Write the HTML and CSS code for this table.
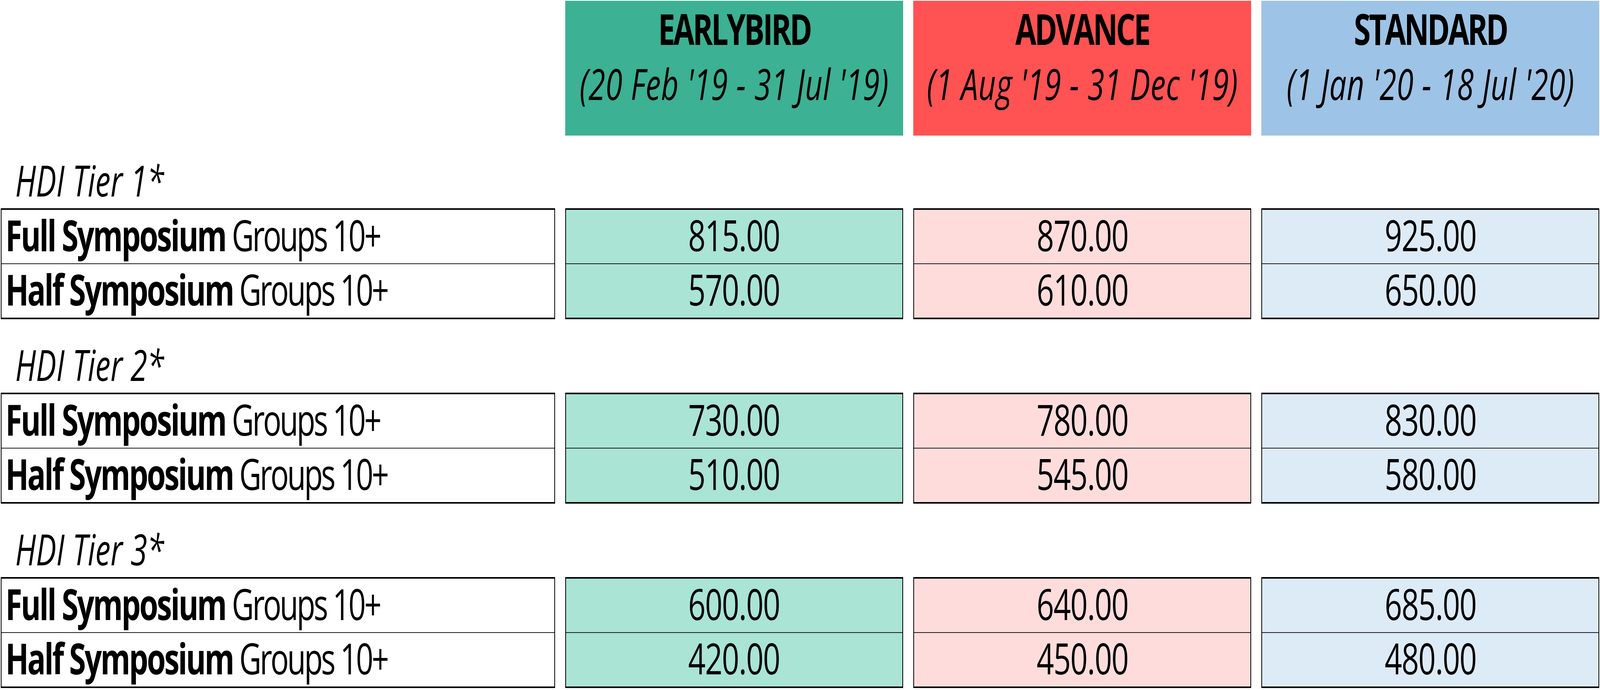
FILE: index.html
```html
<!DOCTYPE html>
<html lang="en">
<head>
<meta charset="utf-8">
<title>Symposium Group Rates</title>
<link rel="stylesheet" href="styles.css">
</head>
<body>
<div class="sheet">
  <div class="cols head-row">
    <div class="blank"></div>
    <div class="head early">
      <div class="head-line head-title"><span class="fit">EARLYBIRD</span></div>
      <div class="head-line head-dates"><span class="fit">(20 Feb '19 - 31 Jul '19)</span></div>
    </div>
    <div class="head advance">
      <div class="head-line head-title"><span class="fit">ADVANCE</span></div>
      <div class="head-line head-dates"><span class="fit">(1 Aug '19 - 31 Dec '19)</span></div>
    </div>
    <div class="head standard">
      <div class="head-line head-title"><span class="fit">STANDARD</span></div>
      <div class="head-line head-dates"><span class="fit">(1 Jan '20 - 18 Jul '20)</span></div>
    </div>
  </div>

  <section class="tier">
    <div class="tier-label"><span class="fit">HDI Tier 1*</span></div>
    <div class="cols">
      <div class="box label-box">
        <div class="cell"><span class="fit"><b>Full Symposium</b> Groups 10+</span></div>
        <div class="cell"><span class="fit"><b>Half Symposium</b> Groups 10+</span></div>
      </div>
      <div class="box early-box">
        <div class="cell num"><span class="fit">815.00</span></div>
        <div class="cell num"><span class="fit">570.00</span></div>
      </div>
      <div class="box advance-box">
        <div class="cell num"><span class="fit">870.00</span></div>
        <div class="cell num"><span class="fit">610.00</span></div>
      </div>
      <div class="box standard-box">
        <div class="cell num"><span class="fit">925.00</span></div>
        <div class="cell num"><span class="fit">650.00</span></div>
      </div>
    </div>
  </section>

  <section class="tier">
    <div class="tier-label"><span class="fit">HDI Tier 2*</span></div>
    <div class="cols">
      <div class="box label-box">
        <div class="cell"><span class="fit"><b>Full Symposium</b> Groups 10+</span></div>
        <div class="cell"><span class="fit"><b>Half Symposium</b> Groups 10+</span></div>
      </div>
      <div class="box early-box">
        <div class="cell num"><span class="fit">730.00</span></div>
        <div class="cell num"><span class="fit">510.00</span></div>
      </div>
      <div class="box advance-box">
        <div class="cell num"><span class="fit">780.00</span></div>
        <div class="cell num"><span class="fit">545.00</span></div>
      </div>
      <div class="box standard-box">
        <div class="cell num"><span class="fit">830.00</span></div>
        <div class="cell num"><span class="fit">580.00</span></div>
      </div>
    </div>
  </section>

  <section class="tier">
    <div class="tier-label"><span class="fit">HDI Tier 3*</span></div>
    <div class="cols">
      <div class="box label-box">
        <div class="cell"><span class="fit"><b>Full Symposium</b> Groups 10+</span></div>
        <div class="cell"><span class="fit"><b>Half Symposium</b> Groups 10+</span></div>
      </div>
      <div class="box early-box">
        <div class="cell num"><span class="fit">600.00</span></div>
        <div class="cell num"><span class="fit">420.00</span></div>
      </div>
      <div class="box advance-box">
        <div class="cell num"><span class="fit">640.00</span></div>
        <div class="cell num"><span class="fit">450.00</span></div>
      </div>
      <div class="box standard-box">
        <div class="cell num"><span class="fit">685.00</span></div>
        <div class="cell num"><span class="fit">480.00</span></div>
      </div>
    </div>
  </section>
</div>
</body>
</html>
```

FILE: styles.css
```css
/* The sheet is drawn on a 5727 x 1766 design grid.
   --ux: one design pixel horizontally, --uy: one design pixel vertically.
   --sx: horizontal squeeze of text when the viewport aspect differs. */
html {
  --ux: calc(100vw / 5727);
  --uy: calc(100vh / 1766);
  --sx: 1;
  --sx: calc(tan(atan2(100vw, 100vh)) * 1766 / 5727);
  margin: 0;
  padding: 0;
  background: #ffffff;
  overflow: hidden;
}

body {
  margin: 0;
  padding: 0;
  font-family: "Open Sans", "Noto Sans", sans-serif;
  font-size: calc(109 * var(--uy));
  color: #000000;
}

.sheet {
  padding: calc(2 * var(--uy)) 0 0 calc(3 * var(--ux));
  width: calc(5722 * var(--ux));
}

.cols {
  display: grid;
  grid-template-columns: calc(1984 * var(--ux)) calc(1210 * var(--ux)) calc(1210 * var(--ux)) calc(1210 * var(--ux));
  column-gap: calc(36 * var(--ux));
}

.fit {
  flex: none;
  white-space: nowrap;
  transform: scaleX(var(--sx));
  transform-origin: left center;
}

/* header */
.head-row {
  height: calc(345 * var(--uy));
}

.head-line {
  height: calc(141 * var(--uy));
  line-height: calc(141 * var(--uy));
  display: flex;
  justify-content: center;
}

.head-line .fit {
  transform-origin: center center;
}

.head-title {
  font-weight: 700;
  letter-spacing: calc(-6 * var(--uy));
}

.head-dates {
  font-style: italic;
  letter-spacing: calc(1 * var(--uy));
}

.early { background: #3cb193; }
.advance { background: #ff5252; }
.standard { background: #9dc3e6; }

/* tier caption */
.tier-label {
  height: calc(188 * var(--uy));
  box-sizing: border-box;
  display: flex;
  align-items: flex-end;
  padding: 0 0 calc(18 * var(--uy)) calc(51 * var(--ux));
  font-style: italic;
  line-height: 1;
}

.tier:first-of-type .tier-label {
  height: calc(186 * var(--uy));
}

/* price boxes */
.box {
  border-style: solid;
  border-color: #000000;
  border-width: calc(4 * var(--uy)) calc(3 * var(--ux));
}

.cell {
  height: calc(137 * var(--uy));
  box-sizing: border-box;
  display: flex;
  align-items: center;
  line-height: 1;
  padding: 0 0 calc(10 * var(--uy)) calc(14 * var(--ux));
  letter-spacing: calc(-6 * var(--uy));
}

.cell + .cell {
  height: calc(139 * var(--uy));
  border-top: calc(2 * var(--uy)) solid #1a1a1a;
}

.cell b {
  font-weight: 700;
  letter-spacing: calc(-5 * var(--uy));
}

.num {
  justify-content: center;
  padding-left: 0;
  letter-spacing: calc(-2 * var(--uy));
}

.num .fit {
  transform-origin: center center;
}

.early-box { background: #a9e4d5; }
.advance-box { background: #ffdcdc; }
.standard-box { background: #ddebf7; }
```
